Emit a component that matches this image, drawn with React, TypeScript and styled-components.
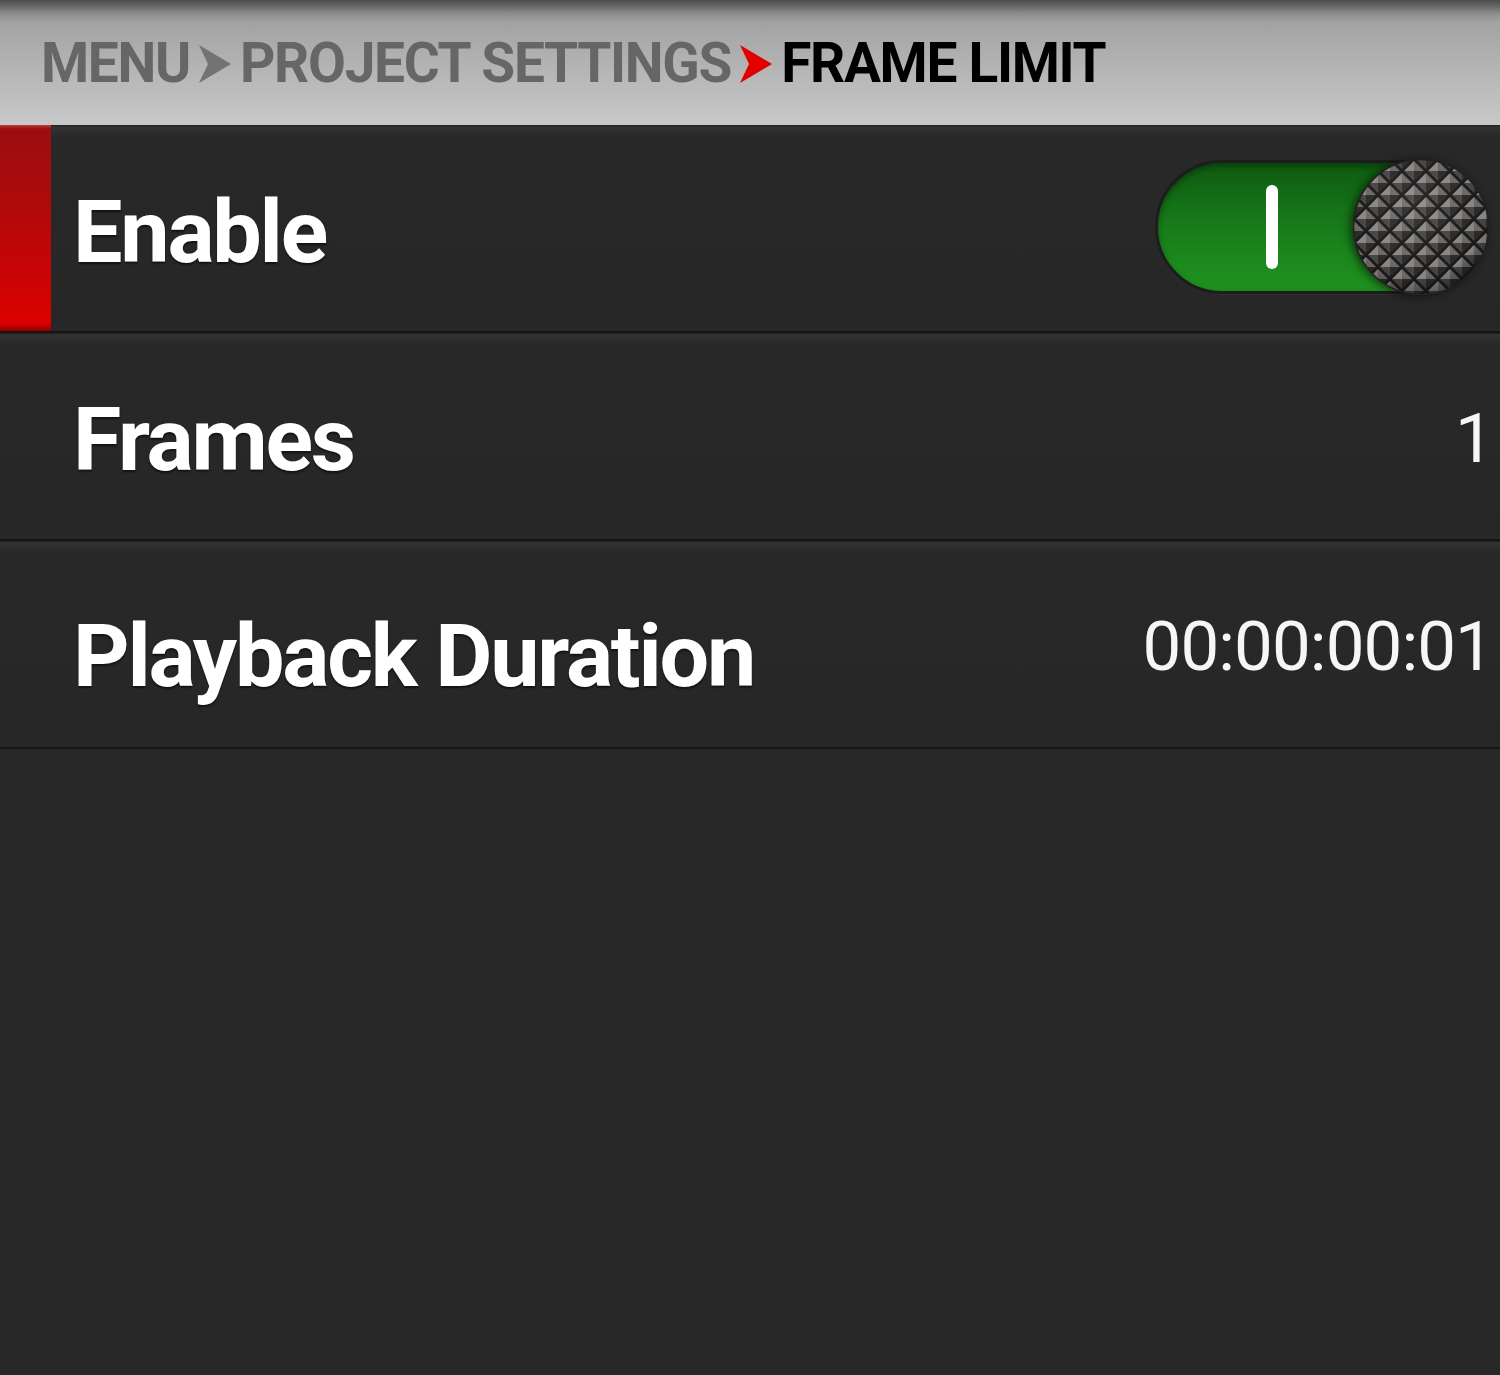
import React from "react";
import styled, { createGlobalStyle } from "styled-components";

const GlobalStyle = createGlobalStyle`
  html, body {
    margin: 0;
    padding: 0;
    background: #282828;
  }
  body {
    font-family: Roboto, "Noto Sans", "Liberation Sans", sans-serif;
  }
`;

const Page = styled.div`
  width: 1500px;
  height: 1375px;
  display: flex;
  flex-direction: column;
  background: #282828;
  overflow: hidden;
  box-shadow: inset 2px 0 0 #303030, inset 0 -3px 2px -1px #1a1a1a;
`;

const Header = styled.header`
  height: 125px;
  flex: none;
  display: flex;
  align-items: center;
  gap: 9px;
  padding-left: 41px;
  padding-top: 2px;
  box-sizing: border-box;
  background: linear-gradient(
    180deg,
    #4e4e4e 0px,
    #616161 5px,
    #8a8a8a 13px,
    #a2a2a2 22px,
    #acacac 45px,
    #bcbcbc 90px,
    #c8c8c8 124px
  );
`;

const Crumb = styled.span<{ $active?: boolean }>`
  font-family: Roboto, "Liberation Sans", sans-serif;
  font-weight: 700;
  font-size: 55px;
  line-height: 1;
  letter-spacing: -1.3px;
  color: ${(p) => (p.$active ? "#000000" : "#666666")};
  white-space: nowrap;
`;

const ChevronSvg = styled.svg`
  width: 32px;
  height: 38px;
  flex: none;
  margin-top: 1px;
`;

const Chevron = ({ color }: { color: string }) => (
  <ChevronSvg viewBox="0 0 32 38">
    <path d="M0 0 L32 19 L0 38 L9 19 Z" fill={color} />
  </ChevronSvg>
);

const List = styled.div`
  display: flex;
  flex-direction: column;
  flex: 1;
`;

const Row = styled.div<{ $selected?: boolean }>`
  height: 208px;
  flex: none;
  box-sizing: border-box;
  display: flex;
  align-items: center;
  padding-left: ${(p) => (p.$selected ? 0 : 73)}px;
  border-bottom: 2px solid #151515;
  background: linear-gradient(180deg, #1e1e1e 0px, #333333 2px, #2b2b2b 8px, #282828 16px, #272727 100%);
`;

const Accent = styled.div`
  width: 51px;
  align-self: stretch;
  flex: none;
  margin-right: 22px;
  background: linear-gradient(180deg, #c23a3a 0px, #9a0e10 4px, #b00a0b 40%, #dc0000 96%, #900000 100%);
`;

const Label = styled.div<{ $drop?: number }>`
  font-family: Roboto, "Liberation Sans", sans-serif;
  font-weight: 700;
  font-size: 88px;
  line-height: 1;
  letter-spacing: -2.2px;
  color: #ffffff;
  text-shadow: 0 2px 2px rgba(0, 0, 0, 0.55);
  padding-top: ${(p) => 8 + (p.$drop ?? 0) * 2}px;
  white-space: nowrap;
`;

const Value = styled.div`
  margin-left: auto;
  padding-right: 7px;
  padding-top: 4px;
  font-family: Roboto, "Liberation Sans", sans-serif;
  font-weight: 400;
  font-size: 69px;
  line-height: 1;
  letter-spacing: -0.9px;
  color: #f6f6f6;
  white-space: nowrap;
`;

const Switch = styled.div`
  margin-left: auto;
  margin-right: 12px;
  width: 333px;
  height: 134px;
  box-sizing: border-box;
  border-radius: 67px;
  border: 3px solid #1d1d1d;
  display: flex;
  align-items: center;
  background: linear-gradient(180deg, #0e5a10 0%, #157318 35%, #1b861c 70%, #1f911f 100%);
  box-shadow: inset 0 3px 6px rgba(0, 0, 0, 0.35), 0 1px 0 rgba(255, 255, 255, 0.04);
  margin-top: -2px;
`;

const OnMark = styled.div`
  width: 12px;
  height: 84px;
  border-radius: 6px;
  background: #ffffff;
  margin-left: 108px;
  flex: none;
`;

const KnobSvg = styled.svg`
  width: 138px;
  height: 138px;
  margin-left: auto;
  margin-right: -5px;
  flex: none;
  filter: drop-shadow(-3px 1px 4px rgba(0, 0, 0, 0.55));
`;

const Knob = () => (
  <KnobSvg viewBox="0 0 138 138">
    <defs>
      <pattern id="quilt" x="2" y="1" width="24" height="24" patternUnits="userSpaceOnUse">
        <rect width="24" height="24" fill="#1b1b1b" />
        {[
          [12, 12],
          [0, 0],
          [24, 0],
          [0, 24],
          [24, 24],
        ].map(([cx, cy], i) => (
          <g key={i}>
            <polygon points={`${cx - 10},${cy} ${cx},${cy - 10} ${cx},${cy}`} fill="#8e8b88" />
            <polygon points={`${cx},${cy - 10} ${cx + 10},${cy} ${cx},${cy}`} fill="#6f6c6a" />
            <polygon points={`${cx - 10},${cy} ${cx},${cy + 10} ${cx},${cy}`} fill="#4a4847" />
            <polygon points={`${cx},${cy + 10} ${cx + 10},${cy} ${cx},${cy}`} fill="#2e2d2c" />
          </g>
        ))}
      </pattern>
      <radialGradient id="knobShade" cx="45%" cy="35%" r="70%">
        <stop offset="0%" stopColor="#ffffff" stopOpacity="0.06" />
        <stop offset="75%" stopColor="#000000" stopOpacity="0.05" />
        <stop offset="100%" stopColor="#000000" stopOpacity="0.45" />
      </radialGradient>
    </defs>
    <circle cx="69" cy="69" r="68" fill="#262626" />
    <circle cx="69" cy="69" r="67" fill="url(#quilt)" />
    <circle cx="69" cy="69" r="67" fill="url(#knobShade)" />
    <circle cx="69" cy="69" r="67.5" fill="none" stroke="#222" strokeWidth="1.5" />
  </KnobSvg>
);

const Empty = styled.div`
  flex: 1;
  background: #282828;
`;

export default function App() {
  return (
    <>
      <GlobalStyle />
      <Page>
        <Header>
          <Crumb>MENU</Crumb>
          <Chevron color="#737373" />
          <Crumb>PROJECT SETTINGS</Crumb>
          <Chevron color="#e00000" />
          <Crumb $active>FRAME LIMIT</Crumb>
        </Header>
        <List>
          <Row $selected>
            <Accent />
            <Label>Enable</Label>
            <Switch>
              <OnMark />
              <Knob />
            </Switch>
          </Row>
          <Row>
            <Label>Frames</Label>
            <Value>1</Value>
          </Row>
          <Row>
            <Label $drop={8}>Playback Duration</Label>
            <Value>00:00:00:01</Value>
          </Row>
          <Empty />
        </List>
      </Page>
    </>
  );
}
